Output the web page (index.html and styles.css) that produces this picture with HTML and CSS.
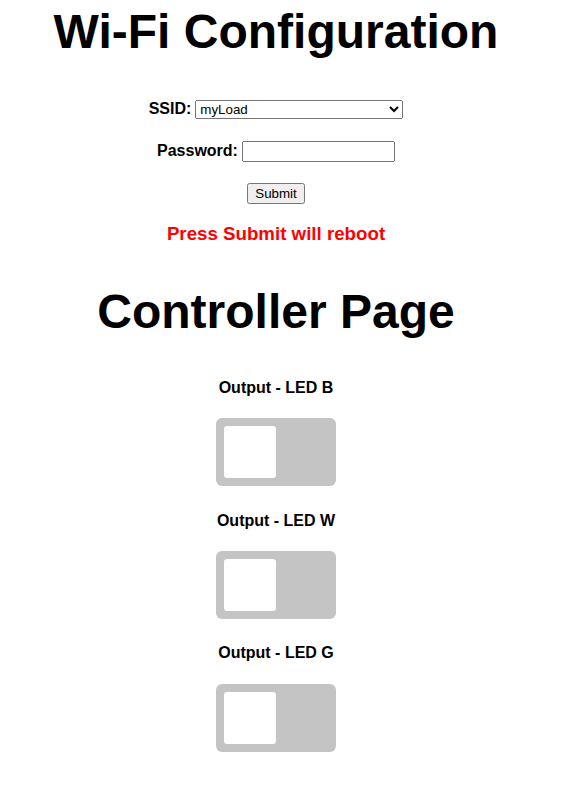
FILE: index.html
```
<!DOCTYPE html>
<html>
<head>
<meta charset="utf-8">
<title>Wi-Fi Configuration</title>
<link rel="stylesheet" href="styles.css">
</head>
<body>
<div class="page">
  <h2 class="title first">Wi-Fi Configuration</h2>
  <form class="wifi-form">
    <div class="form-row">
      <label class="field-label" for="ssid">SSID:</label>
      <select id="ssid" class="ssid-select">
        <option>myLoad</option>
      </select>
    </div>
    <div class="form-row">
      <label class="field-label" for="pass">Password:</label>
      <input id="pass" class="pass-input" type="password">
    </div>
    <div class="form-row">
      <input class="submit-btn" type="submit" value="Submit">
    </div>
  </form>
  <h3 class="warn">Press Submit will reboot</h3>

  <h2 class="title">Controller Page</h2>

  <h4 class="output-label">Output - LED B</h4>
  <label class="switch"><input type="checkbox"><span class="slider"></span></label>

  <h4 class="output-label">Output - LED W</h4>
  <label class="switch"><input type="checkbox"><span class="slider"></span></label>

  <h4 class="output-label">Output - LED G</h4>
  <label class="switch"><input type="checkbox"><span class="slider"></span></label>
</div>
</body>
</html>
```
FILE: styles.css
```
html, body {
  margin: 0;
  padding: 0;
  background: #ffffff;
}

.page {
  width: 552px;
  text-align: center;
  font-family: "Liberation Sans", Arial, sans-serif;
  font-size: 16px;
  color: #000;
}

.title {
  font-size: 48px;
  font-weight: bold;
  margin: 0.83em 0;
}

.title.first {
  margin-top: 4px;
}

.wifi-form {
  margin: 0;
}

.form-row {
  display: flex;
  justify-content: center;
  align-items: center;
  gap: 4px;
  height: 21px;
  margin-top: 21px;
}

.form-row:first-child {
  margin-top: 0;
}

.field-label {
  font-weight: bold;
  font-size: 16px;
}

.ssid-select {
  box-sizing: border-box;
  width: 208px;
  height: 19px;
  font-family: "Liberation Sans", Arial, sans-serif;
  font-size: 13.33px;
  margin: 0;
}

.pass-input {
  box-sizing: border-box;
  width: 153px;
  height: 21px;
  margin: 0;
  font-family: "Liberation Sans", Arial, sans-serif;
  font-size: 13.33px;
}

.submit-btn {
  box-sizing: border-box;
  width: 58px;
  height: 21px;
  margin: 0;
  padding: 1px 6px;
  font-family: "Liberation Sans", Arial, sans-serif;
  font-size: 13.33px;
}

.warn {
  color: #ff0000;
  font-size: 1.17em;
  margin: 1em 0;
}

.output-label {
  font-size: 16px;
  font-weight: bold;
  margin: 1.33em 0;
}

.switch {
  position: relative;
  display: inline-block;
  width: 120px;
  height: 68px;
}

.switch input {
  display: none;
}

.slider {
  position: absolute;
  top: 0;
  left: 0;
  right: 0;
  bottom: 0;
  background-color: #c4c4c4;
  border-radius: 6px;
}

.slider::before {
  content: "";
  position: absolute;
  width: 52px;
  height: 52px;
  left: 8px;
  bottom: 8px;
  background-color: #ffffff;
  border-radius: 3px;
}
```
